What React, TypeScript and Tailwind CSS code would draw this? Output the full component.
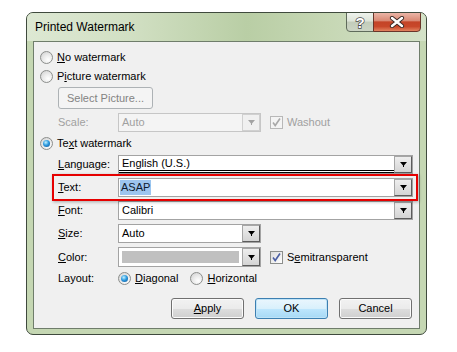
import React from "react";

const FONT = "font-['Liberation_Sans',Arial,sans-serif]";

function Radio({ checked = false }: { checked?: boolean }) {
  return (
    <span className="inline-flex h-[13px] w-[13px] shrink-0 items-center justify-center rounded-full border border-[#8c8e8c] bg-[radial-gradient(circle_at_65%_70%,#ffffff_0%,#ebebeb_45%,#cdcdcd_100%)]">
      {checked && (
        <span className="h-[7px] w-[7px] rounded-full bg-[radial-gradient(circle_at_40%_35%,#c4f2ff_0%,#2e9be0_45%,#0b4c8e_100%)]" />
      )}
    </span>
  );
}

function Check({ disabled = false }: { disabled?: boolean }) {
  return (
    <span
      className={`inline-flex h-[13px] w-[13px] shrink-0 items-center justify-center border ${
        disabled
          ? "border-[#b8b8b8] bg-[#f4f4f4]"
          : "border-[#8c8e8c] bg-[linear-gradient(135deg,#dcdcdc,#ffffff)]"
      }`}
    >
      <svg width="11" height="11" viewBox="0 0 11 11">
        <path
          d="M2 5.5 L4.2 8.5 L9 1.5"
          fill="none"
          stroke={disabled ? "#a9a9a9" : "#4b5fa3"}
          strokeWidth="1.6"
        />
      </svg>
    </span>
  );
}

function Arrow({ disabled = false }: { disabled?: boolean }) {
  return (
    <span
      className={`flex w-[18px] shrink-0 items-center justify-center border ${
        disabled
          ? "border-[#d0d0d0] bg-[#f0f0f0]"
          : "border-t-[#a6a6a6] border-l-[#a6a6a6] border-b-[#5c5c5c] border-r-[#5c5c5c] bg-[linear-gradient(180deg,#eeeeee,#d4d4d4)]"
      }`}
    >
      <svg width="7" height="5" viewBox="0 0 7 5">
        <path d="M0 0H7L4 3.5V5H3V3.5Z" fill={disabled ? "#a3a3a3" : "#000"} />
      </svg>
    </span>
  );
}

function Combo({
  wide = true,
  disabled = false,
  children,
}: {
  wide?: boolean;
  disabled?: boolean;
  children?: React.ReactNode;
}) {
  return (
    <div
      className={`flex h-[19px] ${wide ? "w-[295px]" : "w-[143px]"} border ${
        disabled ? "border-[#c6c6c6] bg-[#f4f4f4]" : "border-[#a3a3a3] bg-white"
      }`}
    >
      <div className="flex min-w-0 flex-1 items-center">{children}</div>
      <Arrow disabled={disabled} />
    </div>
  );
}

function U({ children }: { children: React.ReactNode }) {
  return <span className="underline underline-offset-[1px]">{children}</span>;
}

function Label({ children, disabled = false }: { children: React.ReactNode; disabled?: boolean }) {
  return (
    <span className={`w-[60px] shrink-0 ${disabled ? "text-[#a0a0a0]" : "text-black"}`}>{children}</span>
  );
}

function Btn({ children, isDefault = false }: { children: React.ReactNode; isDefault?: boolean }) {
  return (
    <button
      type="button"
      className={`flex h-[21px] w-[73px] items-center justify-center rounded-[3px] border text-black ${
        isDefault
          ? "border-[#3c7fb1] bg-[linear-gradient(180deg,#eaf6fd_0%,#d9f0fc_50%,#bee6fd_51%,#a7d9f5_100%)] shadow-[inset_0_0_0_1px_#bfe3f7]"
          : "border-[#707070] bg-[linear-gradient(180deg,#f2f2f2_0%,#ebebeb_50%,#dddddd_51%,#cfcfcf_100%)] shadow-[inset_0_0_0_1px_#fbfbfb]"
      }`}
    >
      {children}
    </button>
  );
}

export default function App() {
  return (
    <div className={`h-[352px] w-[457px] bg-white pl-[26px] pt-[12px] text-[11px] leading-none ${FONT}`}>
      <div className="w-[401px] overflow-hidden rounded-[7px] border border-[#3f4a3d] bg-[#c5d7b3] pb-[5px]">
        {/* title bar */}
        <div className="flex h-[28px] justify-between bg-[linear-gradient(90deg,#dde8d3_0%,#d2e0c4_25%,#b9cea5_55%,#c6d7b4_75%,#d4e2c8_100%)] pl-[8px] pr-[5px]">
          <span className="self-center pb-[1px] text-[12px] text-black">Printed Watermark</span>
          <div className="-mt-px flex self-start">
            <span className="flex h-[20px] w-[28px] items-center justify-center rounded-bl-[4px] border border-[#5f6b5b] bg-[linear-gradient(180deg,#eef2ec_0%,#dde4d8_45%,#c2ccba_50%,#ccd5c4_100%)]">
              <svg width="14" height="15" viewBox="0 0 14 15">
                <text
                  x="7"
                  y="13"
                  textAnchor="middle"
                  fontFamily="Liberation Sans, Arial, sans-serif"
                  fontWeight="bold"
                  fontSize="15"
                  fill="#ffffff"
                  stroke="#4a4a4a"
                  strokeWidth="1.4"
                  paintOrder="stroke"
                >
                  ?
                </text>
              </svg>
            </span>
            <span className="-ml-px flex h-[20px] w-[48px] items-center justify-center rounded-br-[4px] border border-[#6a3529] bg-[linear-gradient(180deg,#ebb5a7_0%,#d98a75_42%,#c44427_50%,#c8482a_75%,#e2835f_100%)]">
              <svg width="16" height="12" viewBox="0 0 16 12">
                <path d="M3 2 L13 10 M13 2 L3 10" stroke="#3a2a26" strokeWidth="4.2" strokeLinecap="round" />
                <path d="M3 2 L13 10 M13 2 L3 10" stroke="#ffffff" strokeWidth="2.4" strokeLinecap="round" />
              </svg>
            </span>
          </div>
        </div>

        {/* client area */}
        <div className="relative ml-[6px] w-[387px] border border-[#6f7d6b] bg-[#f0f0f0] pb-[9px] pl-[6px] pt-[6px]">
          <div className="flex h-[19px] items-center gap-[4px]">
            <Radio />
            <span>
              <U>N</U>o watermark
            </span>
          </div>
          <div className="flex h-[19px] items-center gap-[4px]">
            <Radio />
            <span>
              P<U>i</U>cture watermark
            </span>
          </div>
          <div className="ml-[18px] mt-[1px] flex h-[22px] w-[95px] items-center justify-center rounded-[3px] border border-[#adb2b5] bg-[#f4f4f4] text-[#838383]">
            Select Picture...
          </div>
          <div className="ml-[18px] mt-[4px] flex h-[19px] items-center">
            <Label disabled>Scale:</Label>
            <Combo wide={false} disabled>
              <span className="pl-[3px] text-[#a0a0a0]">Auto</span>
            </Combo>
            <span className="ml-[9px] flex items-center gap-[4px] text-[#a0a0a0]">
              <Check disabled />
              Washout
            </span>
          </div>
          <div className="mt-[2px] flex h-[19px] items-center gap-[4px]">
            <Radio checked />
            <span>
              Te<U>x</U>t watermark
            </span>
          </div>

          <div className="ml-[18px] mt-[2px] flex h-[19px] items-center">
            <Label>
              <U>L</U>anguage:
            </Label>
            <Combo>
              <div className="flex h-full w-full items-center border-b-[3px] border-double border-black pl-[3px] pt-[1px]">
                English (U.S.)
              </div>
            </Combo>
          </div>

          <div className="ml-[18px] mt-[4px] flex h-[19px] items-center">
            <Label>
              <U>T</U>ext:
            </Label>
            <Combo>
              <span className="ml-[1px] bg-[#9dc5ef] px-[1px] py-[2px] text-[#0e1a2e]">ASAP</span>
            </Combo>
          </div>

          <div className="ml-[18px] mt-[4px] flex h-[19px] items-center">
            <Label>
              <U>F</U>ont:
            </Label>
            <Combo>
              <span className="pl-[3px]">Calibri</span>
            </Combo>
          </div>

          <div className="ml-[18px] mt-[4px] flex h-[19px] items-center">
            <Label>
              <U>S</U>ize:
            </Label>
            <Combo wide={false}>
              <span className="pl-[3px]">Auto</span>
            </Combo>
          </div>

          <div className="ml-[18px] mt-[4px] flex h-[20px] items-center">
            <Label>
              <U>C</U>olor:
            </Label>
            <div className="flex h-[20px] w-[143px] border border-[#a3a3a3] bg-white">
              <div className="m-[3px] flex-1 bg-[#c0c0c0]" />
              <Arrow />
            </div>
            <span className="ml-[9px] flex items-center gap-[4px]">
              <Check />
              <span>
                S<U>e</U>mitransparent
              </span>
            </span>
          </div>

          <div className="ml-[18px] mt-[2px] flex h-[19px] items-center">
            <Label>Layout:</Label>
            <span className="flex items-center gap-[4px]">
              <Radio checked />
              <span>
                <U>D</U>iagonal
              </span>
            </span>
            <span className="ml-[12px] flex items-center gap-[4px]">
              <Radio />
              <span>
                <U>H</U>orizontal
              </span>
            </span>
          </div>

          <div className="mt-[10px] flex justify-end gap-[11px] pr-[7px]">
            <Btn>
              <U>A</U>pply
            </Btn>
            <Btn isDefault>OK</Btn>
            <Btn>Cancel</Btn>
          </div>

          {/* red highlight annotation around the Text row */}
          <div className="pointer-events-none absolute left-[18px] top-[132px] h-[27px] w-[366px] border-2 border-[#e60000] shadow-[1px_1px_3px_rgba(0,0,0,0.3)]" />
        </div>
      </div>
    </div>
  );
}
